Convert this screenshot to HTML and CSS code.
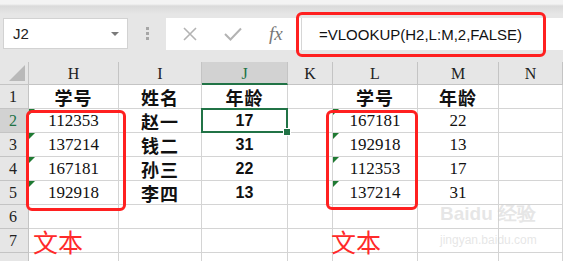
FILE: index.html
```html
<!DOCTYPE html>
<html>
<head>
    <meta name="viewport" content="width=device-width, initial-scale=1.0">
    <link rel="stylesheet" href="styles.css">
</head>
<body>
    <div class="app">
        <div class="toolbar">
            <div class="namebox">
                <span class="cellref">J2</span>
                <span class="caret"></span>
            </div>
            <div class="grip"><i></i><i></i><i></i></div>
            <div class="fbar">
                <div class="fbtns">
                    <svg class="ico" width="16" height="16" viewBox="0 0 16 16"><path d="M2 2 L14 14 M14 2 L2 14" stroke="#b3b3b3" stroke-width="1.6" fill="none"/></svg>
                    <svg class="ico" width="18" height="14" viewBox="0 0 18 14"><path d="M1 7 L6.5 12.5 L17 1.5" stroke="#b3b3b3" stroke-width="2" fill="none"/></svg>
                    <span class="fx">fx</span>
                </div>
                <div class="finput">=VLOOKUP(H2,L:M,2,FALSE)</div>
            </div>
        </div>

        <div class="sheet">
            <div class="c hd corner"></div>
            <div class="c hd">H</div>
            <div class="c hd">I</div>
            <div class="c hd on-col">J</div>
            <div class="c hd">K</div>
            <div class="c hd">L</div>
            <div class="c hd">M</div>
            <div class="c hd">N</div>

            <div class="c rh">1</div>
            <div class="c cn">学号</div>
            <div class="c cn">姓名</div>
            <div class="c cn">年龄</div>
            <div class="c"></div>
            <div class="c cn">学号</div>
            <div class="c cn">年龄</div>
            <div class="c"></div>

            <div class="c rh on-row">2</div>
            <div class="c num tri">112353</div>
            <div class="c cn">赵一</div>
            <div class="c bnum sel">17</div>
            <div class="c"></div>
            <div class="c num tri">167181</div>
            <div class="c num">22</div>
            <div class="c"></div>

            <div class="c rh">3</div>
            <div class="c num tri">137214</div>
            <div class="c cn">钱二</div>
            <div class="c bnum">31</div>
            <div class="c"></div>
            <div class="c num tri">192918</div>
            <div class="c num">13</div>
            <div class="c"></div>

            <div class="c rh">4</div>
            <div class="c num tri">167181</div>
            <div class="c cn">孙三</div>
            <div class="c bnum">22</div>
            <div class="c"></div>
            <div class="c num tri">112353</div>
            <div class="c num">17</div>
            <div class="c"></div>

            <div class="c rh">5</div>
            <div class="c num tri">192918</div>
            <div class="c cn">李四</div>
            <div class="c bnum">13</div>
            <div class="c"></div>
            <div class="c num tri">137214</div>
            <div class="c num">31</div>
            <div class="c"></div>

            <div class="c rh">6</div>
            <div class="c"></div>
            <div class="c"></div>
            <div class="c"></div>
            <div class="c"></div>
            <div class="c"></div>
            <div class="c"></div>
            <div class="c"></div>

            <div class="c rh">7</div>
            <div class="c note">文本</div>
            <div class="c"></div>
            <div class="c"></div>
            <div class="c"></div>
            <div class="c note note-l">文本</div>
            <div class="c"></div>
            <div class="c"></div>

            <div class="c rh"></div>
            <div class="c"></div>
            <div class="c"></div>
            <div class="c"></div>
            <div class="c"></div>
            <div class="c"></div>
            <div class="c"></div>
            <div class="c"></div>
        </div>

        <!-- red annotation frames -->
        <div class="mark mark-formula"></div>
        <div class="mark mark-h"></div>
        <div class="mark mark-l"></div>

        <div class="watermark">
            <div class="wm-big">Baidu 经验</div>
            <div class="wm-small">jingyan.baidu.com</div>
        </div>
    </div>
</body>
</html>
```

FILE: styles.css
```css
* {
    margin: 0;
    padding: 0;
    box-sizing: border-box;
}

body {
    background: #fff;
    overflow: hidden;
    font-family: 'Liberation Serif', serif;
}

.app {
    position: relative;
    width: 563px;
    height: 261px;
    overflow: hidden;
}

/* formula bar */
.toolbar {
    height: 62px;
    display: flex;
    align-items: flex-start;
    padding-top: 18px;
    background: linear-gradient(#f3f3f3 0, #f3f3f3 4px, #dadada 6px, #e6e6e6 14px, #e6e6e6 100%);
}

.namebox {
    width: 125px;
    height: 31px;
    margin-left: 3px;
    background: #fff;
    border: 1px solid #d2d2d2;
    display: flex;
    align-items: center;
    justify-content: space-between;
    padding: 0 8px 0 9px;
}

.cellref {
    font-family: 'Liberation Sans', sans-serif;
    font-size: 15px;
    color: #222;
}

.caret {
    width: 0;
    height: 0;
    border-left: 4px solid transparent;
    border-right: 4px solid transparent;
    border-top: 4px solid #7a7a7a;
}

.grip {
    width: 38px;
    height: 31px;
    display: flex;
    flex-direction: column;
    align-items: center;
    justify-content: center;
    gap: 2px;
}

.grip i {
    width: 3px;
    height: 3px;
    background: #a6a6a6;
}

.fbar {
    flex: 1;
    height: 32px;
    display: flex;
    background: #fff;
}

.fbtns {
    width: 136px;
    display: flex;
    align-items: center;
    padding-left: 16px;
    gap: 28px;
    border-right: 1px solid #d6d6d6;
}

.fbtns .ico:nth-child(2) {
    margin-left: -2px;
}

.fx {
    font-family: 'Liberation Serif', serif;
    font-style: italic;
    font-size: 19px;
    color: #777;
    margin-left: -1px;
}

.finput {
    flex: 1;
    padding-left: 17px;
    display: flex;
    align-items: center;
    font-family: 'Liberation Sans', sans-serif;
    font-size: 15px;
    color: #111;
}

/* sheet grid */
.sheet {
    display: grid;
    grid-template-columns: 29px 90px 83px 86px 45px 85px 81px 64px;
    grid-template-rows: 23px repeat(8, 24px);
}

.c {
    border-right: 1px solid #d4d4d4;
    border-bottom: 1px solid #d4d4d4;
    display: flex;
    align-items: center;
    justify-content: center;
    position: relative;
    color: #111;
}

.hd {
    background: #e6e6e6;
    border-right-color: #c4c4c4;
    border-bottom-color: #c4c4c4;
    font-size: 16px;
    color: #222;
    padding-top: 2px;
}

.corner::after {
    content: '';
    position: absolute;
    right: 3px;
    bottom: 3px;
    border-left: 16px solid transparent;
    border-bottom: 16px solid #b9b9b9;
}

.on-col {
    background: #d2d2d2;
    color: #217346;
    border-bottom: 2px solid #217346;
}

.rh {
    background: #e6e6e6;
    border-right-color: #c4c4c4;
    border-bottom-color: #c4c4c4;
    font-size: 16px;
    color: #222;
    justify-content: flex-start;
    padding-left: 9px;
}

.on-row {
    background: #d2d2d2;
    color: #217346;
}

.cn {
    font-family: 'Noto Sans CJK SC', sans-serif;
    font-weight: 700;
    font-size: 18px;
    letter-spacing: 1px;
}

.num {
    font-size: 17px;
}

.bnum {
    font-family: 'Liberation Sans', sans-serif;
    font-weight: 700;
    font-size: 16px;
}

.tri::before {
    content: '';
    position: absolute;
    left: 0;
    top: 0;
    border-top: 6px solid #1f7a33;
    border-right: 6px solid transparent;
}

.sel::after {
    content: '';
    position: absolute;
    left: -1px;
    top: -1px;
    right: -1px;
    bottom: -1px;
    border: 2px solid #217346;
}

.sel::before {
    content: '';
    position: absolute;
    right: -4px;
    bottom: -4px;
    width: 6px;
    height: 6px;
    background: #217346;
    border: 1px solid #fff;
    z-index: 2;
}

.note {
    justify-content: flex-start;
    padding-left: 4px;
    font-family: 'Noto Sans CJK SC', sans-serif;
    font-size: 25px;
    font-weight: 400;
    color: #ff2a2a;
    white-space: nowrap;
}

.note-l {
    padding-left: 0;
    text-indent: -2px;
}

/* annotation frames */
.mark {
    position: absolute;
    border: 3px solid #ff2020;
    border-radius: 6px;
}

.mark-formula {
    left: 296px;
    top: 12px;
    width: 250px;
    height: 45px;
}

.mark-h {
    left: 26px;
    top: 110px;
    width: 100px;
    height: 101px;
}

.mark-l {
    left: 326px;
    top: 110px;
    width: 92px;
    height: 100px;
}

.watermark {
    position: absolute;
    left: 440px;
    top: 204px;
    color: rgba(205, 205, 205, 0.5);
    font-family: 'Liberation Sans', sans-serif;
    pointer-events: none;
}

.wm-big {
    font-size: 19px;
    font-weight: 700;
    line-height: 20px;
}

.wm-small {
    font-size: 12px;
    margin-top: 9px;
}
```
